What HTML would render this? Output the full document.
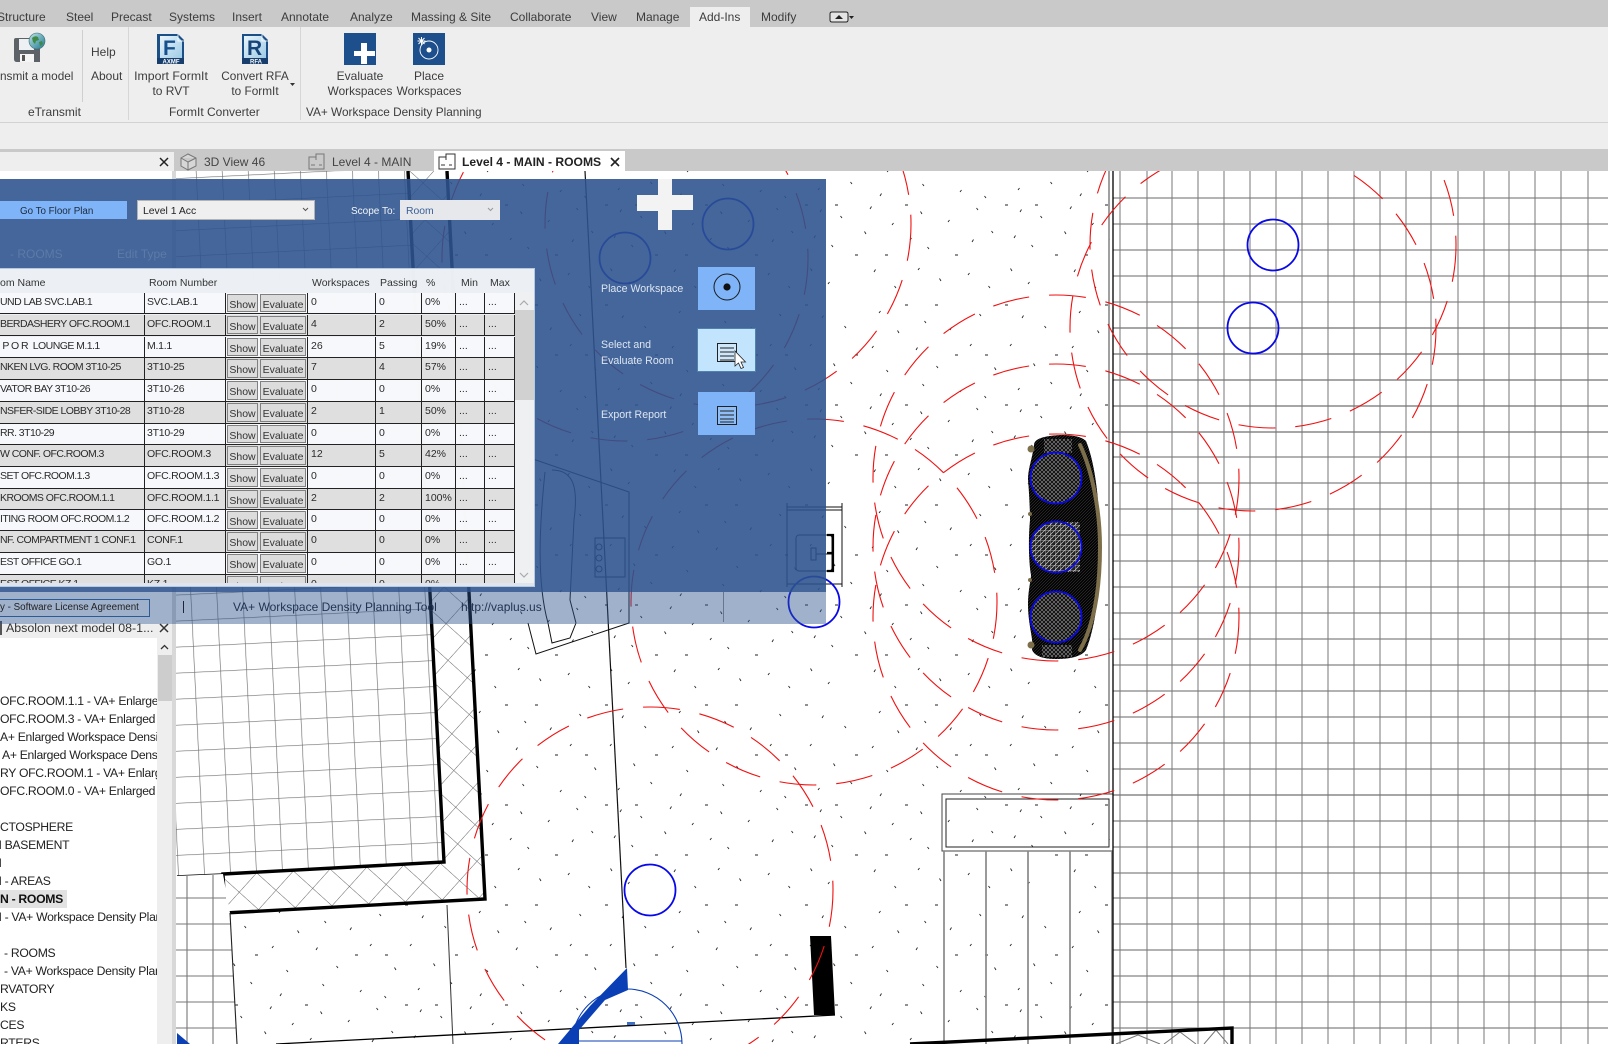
<!DOCTYPE html>
<html><head><meta charset="utf-8"><title>VA+ Workspace Density Planning</title>
<style>
html,body{margin:0;padding:0;background:#fff}
body{width:1608px;height:1044px;position:relative;overflow:hidden;font-family:"Liberation Sans",Arial,sans-serif;color:#3c3c3c}
.a,.t{position:absolute}
.t{white-space:nowrap;font-size:12px;line-height:14px}
.n{font-size:11.8px}
.c{transform:translateX(-50%)}
svg{position:absolute;left:0;top:0;display:block}
#list .t{font-size:12.2px;color:#222;letter-spacing:-.3px}
#win{position:absolute;left:0;top:268px;width:535px;height:319px;background:rgba(255,255,255,.9);border:1px solid #b7c9df;border-left:0;box-sizing:border-box;overflow:hidden}
.r{position:absolute;left:0;width:515px;border-bottom:1px solid #222;box-sizing:content-box;font-size:10.5px;color:#2a2a2a;background:rgba(255,255,255,.55)}
.r.g{background:rgba(222,222,222,.97)}
.r i,.r b{position:absolute;top:0;bottom:0;font-style:normal;font-weight:normal;white-space:nowrap;overflow:hidden;line-height:19px;box-sizing:border-box}
.r i{border-right:1px solid #222}
.r i:nth-child(1){left:0;width:145px;padding-left:0;letter-spacing:-.55px}
.r i:nth-child(2){left:145px;width:81px;padding-left:2px;letter-spacing:-.25px}
.r b{top:1px;bottom:1px;background:#dcdcdc;border:1px solid #808080;text-align:center;line-height:20px;color:#333}
.r b:nth-child(3){left:227px;width:31px}
.r b:nth-child(4){left:260px;width:46px}
.r i:nth-child(5){left:307px;width:69px;padding-left:3px;border-left:1px solid #222}
.r i:nth-child(6){left:376px;width:46px;padding-left:3px}
.r i:nth-child(7){left:422px;width:34px;padding-left:3px}
.r i:nth-child(8){left:456px;width:29px;padding-left:3px}
.r i:nth-child(9){left:485px;width:30px;padding-left:3px}
</style></head><body>

<svg width="1608" height="1044" viewBox="0 0 1608 1044">
<defs>
<pattern id="sp" patternUnits="userSpaceOnUse" width="200" height="200">
<path fill="none" stroke="#222" stroke-width=".9" d="M5 5h3M55 55h3M105 5h3M155 55h3M5 105h3M55 155h3M105 105h3M155 155h3M35 5h3M135 105h3M85 55h3M185 155h3
M20 12l1.500-2.500M42 18l-1.500-2M70 9l1.500-2.500M92 25l1.500-2M122 14l-1.500-2.500M148 22l1.500-2M178 10l-1.500-2M14 38l1.500-2.500M33 47l-1.500-2M66 34l-1.500-2.500M110 40l1.500-2M129 49l-1.500-2M172 42l1.500-2.500M193 33l-1.500-2
M12 71l-1.500-2.500M28 84l1.500-2M74 72l1.500-2.500M96 88l-1.500-2M118 70l1.500-2M141 81l-1.500-2.500M168 75l1.500-2M190 88l-1.500-2M22 118l1.500-2.500M46 128l-1.500-2M79 113l1.500-2M99 133l-1.500-2.500M126 123l-1.500-2M150 130l1.500-2.500M181 116l-1.500-2M10 146l1.500-2M35 166l-1.500-2.500M72 148l1.500-2M88 172l-1.500-2M116 150l1.500-2.500M138 168l-1.500-2M170 146l1.500-2M196 170l-1.500-2.500M18 190l1.500-2M52 184l-1.500-2M80 196l1.500-2.500M124 186l-1.500-2M160 192l1.500-2M186 198l-1.500-2"/>
</pattern>
<pattern id="gr" patternUnits="userSpaceOnUse" width="26" height="26" patternTransform="translate(193 646) rotate(-2.8)">
<path d="M0 0H26M0 0V26" stroke="#707070" stroke-width="1.3" fill="none"/>
</pattern>
<pattern id="hx" patternUnits="userSpaceOnUse" width="26" height="26" patternTransform="translate(448 660) rotate(42)">
<path d="M0 0H26M0 0V26" stroke="#666" stroke-width="1" fill="none"/>
</pattern>
<pattern id="mesh" patternUnits="userSpaceOnUse" width="4" height="4">
<rect width="4" height="4" fill="#151515"/><path d="M0 4L4 0M0 0L4 4" stroke="#aaa" stroke-width=".5"/>
</pattern>
<pattern id="mesh2" patternUnits="userSpaceOnUse" width="3" height="3">
<rect width="3" height="3" fill="#050505"/><path d="M0 3L3 0" stroke="#555" stroke-width=".4"/>
</pattern>
<pattern id="mesh3" patternUnits="userSpaceOnUse" width="5" height="5">
<rect width="5" height="5" fill="#222"/><path d="M0 5L5 0M0 0H5M0 0V5" stroke="#ccc" stroke-width=".7"/>
</pattern>
</defs>

<!-- speckle -->
<rect x="176" y="171" width="934" height="873" fill="url(#sp)"/>

<!-- room with grid -->
<polygon points="176,171 408,171 444,862 223,874 177,876 176,876" fill="#fff"/>
<polygon points="176,171 408,171 444,862 223,874 177,876 176,876" fill="url(#gr)"/>
<!-- hatch wall -->
<polygon points="408,171 447,171 485,899 225,913 223,874 444,862" fill="#fff"/>
<polygon points="408,171 447,171 485,899 225,913 223,874 444,862" fill="url(#hx)"/>
<path d="M408 171L444 862L223 874L225 913L485 899L447 171" fill="none" stroke="#000" stroke-width="3.4"/>
<path d="M223 874L177 876" stroke="#000" stroke-width="1.4"/>

<!-- lower-left grid -->
<polygon points="176,876 223,874 230,913 237,1044 176,1044" fill="#fff"/>
<path d="M176 898H226M176 924H231M176 950H232M176 976H233M176 1002H235M176 1028H236M187 876V1044M213 875V1044" stroke="#777" stroke-width="1.1" fill="none"/>
<path d="M230 913L237 1044" stroke="#222" stroke-width="1.1"/>
<polygon points="177,1033 190,1044 177,1044" fill="#0b3fb5"/>

<!-- thin lines -->
<path d="M447 905L453 1044" stroke="#333" stroke-width="1"/>
<path d="M585 171L626 968" stroke="#111" stroke-width="1.2" fill="none"/>
<path d="M276 1044L835 1015" stroke="#000" stroke-width="1.3"/>

<!-- furniture under overlay -->
<g fill="none" stroke="#111" stroke-width="1">
<path d="M530 458L629 492V623L536 654L528 623"/>
<path d="M548 623L552 643L570 638L576 623M552 470C575 470 578 490 574 520L570 600L576 623M545 472C540 520 536 580 548 623"/>
<rect x="595" y="538" width="30" height="39"/>
<circle cx="599" cy="547" r="3"/><circle cx="599" cy="558" r="3"/><circle cx="599" cy="569" r="3"/>
<path d="M787 503V587M787 507H842M787 510H842M842 503V587M787 584H842"/>
<rect x="796" y="535" width="36" height="36" rx="3"/>
<path d="M811 548H816V560H811ZM816 554H833"/>
</g>
<path d="M827 535H833V571H827M833 553H827" fill="none" stroke="#000" stroke-width="2.2"/>

<!-- right building -->
<rect x="942" y="794" width="171" height="57" fill="#fff" stroke="#444" stroke-width="1"/>
<rect x="942" y="794" width="168" height="57" fill="url(#sp)"/>
<rect x="946" y="799" width="163" height="48" fill="none" stroke="#222" stroke-width="1"/>
<path d="M944 851V1044M986 851V1044M1028 851V1044M1070 851V1044M1112 851V1044" stroke="#888" stroke-width="1.7" fill="none"/>

<!-- right white & grid -->
<rect x="1113" y="171" width="495" height="873" fill="#fff"/>
<path d="M1113 198H1608M1113 224H1608M1113 250H1608M1113 276H1608M1113 302H1608" stroke="#aaa" stroke-width="1.8" fill="none"/>
<path d="M1113 328H1608M1113 354H1608M1113 380H1608M1113 406H1608M1113 432H1608M1113 795H1608" stroke="#888" stroke-width="1.4" fill="none"/>
<path d="M1113 457H1608M1113 483H1608M1113 509H1608M1113 535H1608M1113 561H1608M1113 587H1608M1113 613H1608M1113 639H1608M1113 665H1608M1113 691H1608M1113 717H1608M1113 743H1608M1113 769H1608M1113 821H1608M1113 847H1608M1113 873H1608M1113 898H1608M1113 924H1608M1113 950H1608M1113 976H1608M1113 1002H1608M1113 1028H1608" stroke="#666" stroke-width="1.1" fill="none"/>
<path d="M1120 171V1044M1147 171V1044M1172 171V1044M1198 171V1044M1224 171V1044M1250 171V1044M1276 171V1044M1302 171V1044M1328 171V1044M1354 171V1044M1380 171V1044M1406 171V1044M1431 171V1044M1458 171V1044M1484 171V1044M1509 171V1044M1535 171V1044M1561 171V1044M1588 171V1044" stroke="#777" stroke-width="1" fill="none"/>
<path d="M1109 171V794" stroke="#888" stroke-width="1.6"/>
<path d="M1113 171V1044" stroke="#000" stroke-width="1.3"/>

<!-- bottom thick line -->
<path d="M1138 1035L1160 1044M1138 1035L1116 1044M1180 1032L1196 1044M1180 1032L1164 1044M1216 1030L1228 1044M1216 1030L1204 1044" stroke="#777" fill="none"/>
<path d="M910 1044L1232 1028V1044" fill="none" stroke="#000" stroke-width="3.4"/>

<!-- black rect -->
<polygon points="810,936 831,936 835,1015 814,1015" fill="#000"/>

<!-- blue wedge bottom -->
<polygon points="627,968 628,990 605,1000 579,1030 579,1044 558,1044 590,1006" fill="#0b3fb5"/>
<path d="M578 1041H682M572 1044A55 55 0 0 1 682 1044" fill="none" stroke="#0b3fb5" stroke-width="1.1"/>
<rect x="627" y="1022" width="8" height="3" fill="#3e6fc8"/>

<!-- sofa -->
<path d="M1034 445Q1034 436 1062 435Q1080 435 1086 441C1098 470 1100 520 1100 547C1100 590 1096 625 1086 650Q1080 659 1056 659Q1036 659 1032 650C1034 640 1028 625 1028 605C1028 590 1031 580 1031 575C1029 565 1028 540 1030 520C1030 510 1029 490 1028 480C1028 468 1032 460 1034 445Z" fill="url(#mesh2)"/>
<rect x="1044" y="439" width="28" height="14" fill="url(#mesh)"/>
<rect x="1042" y="645" width="30" height="12" fill="url(#mesh)"/>
<circle cx="1056" cy="478" r="25" fill="url(#mesh)"/>
<rect x="1048" y="522" width="32" height="50" fill="url(#mesh3)"/>
<circle cx="1056" cy="547" r="25" fill="url(#mesh3)"/>
<circle cx="1056" cy="617" r="25" fill="url(#mesh)"/>
<path d="M1080 445C1092 470 1100 510 1100 547C1100 590 1094 625 1080 650" fill="none" stroke="#7d6f4a" stroke-width="4" stroke-linecap="round"/>
<g fill="#7d6f4a"><circle cx="1031" cy="449" r="3.5"/><circle cx="1031" cy="645" r="3.5"/><circle cx="1030" cy="514" r="2"/><circle cx="1030" cy="580" r="2"/></g>

<!-- red circles -->
<g fill="none" stroke="#f01010" stroke-width="1.1" stroke-dasharray="37 20">
<circle cx="1056" cy="478" r="183"/>
<circle cx="1056" cy="547" r="183"/>
<circle cx="1056" cy="617" r="183"/>
<circle cx="1273" cy="245" r="183"/>
<circle cx="1253" cy="328" r="183"/>
<circle cx="814" cy="602" r="183"/>
<circle cx="728" cy="224" r="183"/>
<circle cx="625" cy="258" r="183"/>
<circle cx="650" cy="890" r="183"/>
</g>
<!-- blue circles -->
<g fill="none" stroke="#0808e8" stroke-width="1.8">
<circle cx="1056" cy="478" r="25.5"/>
<circle cx="1056" cy="547" r="25.5"/>
<circle cx="1056" cy="617" r="25.5"/>
<circle cx="1273" cy="245" r="25.5"/>
<circle cx="1253" cy="328" r="25.5"/>
<circle cx="814" cy="602" r="25.5"/>
<circle cx="728" cy="224" r="25.5"/>
<circle cx="625" cy="258" r="25.5"/>
<circle cx="650" cy="890" r="25.5"/>
</g>
</svg>

<!-- chrome -->
<div class="a" style="left:0;top:0;width:1608px;height:27px;background:#c9c9c9"></div>
<div class="a" style="left:690px;top:7px;width:60px;height:20px;background:#eee"></div>
<div class="a" style="left:0;top:27px;width:1608px;height:95px;background:#eee"></div>
<div class="a" style="left:0;top:122px;width:1608px;height:1px;background:#d2d2d2"></div>
<div class="a" style="left:0;top:123px;width:1608px;height:26px;background:#eee"></div>
<div class="a" style="left:0;top:149px;width:1608px;height:22px;background:#c9c9c9"></div>
<div class="a" style="left:0;top:152px;width:174px;height:19px;background:#eee"></div>
<div class="a" style="left:434px;top:151px;width:191px;height:20px;background:#fff"></div>
<div class="a" style="left:82px;top:30px;width:1px;height:72px;background:#cfcfcf"></div>
<div class="a" style="left:128px;top:27px;width:1px;height:93px;background:#d6d6d6"></div>
<div class="a" style="left:300px;top:27px;width:1px;height:93px;background:#d6d6d6"></div>

<!-- ribbon tabs -->
<span class="t" style="left:-3px;top:10px">Structure</span>
<span class="t" style="left:66px;top:10px">Steel</span>
<span class="t" style="left:111px;top:10px">Precast</span>
<span class="t" style="left:169px;top:10px">Systems</span>
<span class="t" style="left:232px;top:10px">Insert</span>
<span class="t" style="left:281px;top:10px">Annotate</span>
<span class="t" style="left:350px;top:10px">Analyze</span>
<span class="t" style="left:411px;top:10px">Massing &amp; Site</span>
<span class="t" style="left:510px;top:10px">Collaborate</span>
<span class="t" style="left:591px;top:10px">View</span>
<span class="t" style="left:636px;top:10px">Manage</span>
<span class="t" style="left:699px;top:10px">Add-Ins</span>
<span class="t" style="left:761px;top:10px">Modify</span>

<!-- ribbon labels -->
<span class="t n" style="left:0;top:69px">nsmit a model</span>
<span class="t" style="left:91px;top:45px">Help</span>
<span class="t" style="left:91px;top:69px">About</span>
<span class="t c" style="left:171px;top:69px;font-size:12.3px">Import FormIt</span>
<span class="t c" style="left:171px;top:84px">to RVT</span>
<span class="t c n" style="left:255px;top:69px">Convert RFA</span>
<span class="t c n" style="left:255px;top:84px">to FormIt</span>
<span class="t c" style="left:360px;top:69px">Evaluate</span>
<span class="t c n" style="left:360px;top:84px">Workspaces</span>
<span class="t c" style="left:429px;top:69px">Place</span>
<span class="t c n" style="left:429px;top:84px">Workspaces</span>
<span class="t" style="left:28px;top:105px">eTransmit</span>
<span class="t" style="left:169px;top:105px">FormIt Converter</span>
<span class="t n" style="left:306px;top:105px">VA+ Workspace Density Planning</span>

<!-- view tabs -->
<span class="t" style="left:204px;top:155px;color:#444">3D View 46</span>
<span class="t" style="left:332px;top:155px;color:#444">Level 4 - MAIN</span>
<span class="t" style="left:462px;top:155px;color:#222;font-weight:bold;font-size:12.1px">Level 4 - MAIN - ROOMS</span>

<!-- left panel lower -->
<div class="a" style="left:0;top:171px;width:172px;height:453px;background:#fff"></div>
<div class="a" style="left:172px;top:171px;width:4px;height:873px;background:#d8d8d8"></div>
<div class="a" style="left:0;top:624px;width:172px;height:14px;background:#eee"></div>
<div class="a" id="list" style="left:0;top:638px;width:157px;height:406px;background:#fff;overflow:hidden">
<span class="t" style="left:0;top:56px">OFC.ROOM.1.1 - VA+ Enlarged Workspace</span>
<span class="t" style="left:0;top:74px">OFC.ROOM.3 - VA+ Enlarged Workspace</span>
<span class="t" style="left:0;top:92px">A+ Enlarged Workspace Density Plan</span>
<span class="t" style="left:2px;top:110px">A+ Enlarged Workspace Density Plan</span>
<span class="t" style="left:0;top:128px">RY OFC.ROOM.1 - VA+ Enlarged Workspace</span>
<span class="t" style="left:0;top:146px">OFC.ROOM.0 - VA+ Enlarged Workspace</span>
<span class="t" style="left:0;top:182px">CTOSPHERE</span>
<span class="t" style="left:-7px;top:200px">N BASEMENT</span>
<span class="t" style="left:-7px;top:218px">N</span>
<span class="t" style="left:-7px;top:236px">N - AREAS</span>
<div class="a" style="left:0;top:252px;width:67px;height:18px;background:#e2e2e2"></div>
<span class="t" style="left:0;top:254px;font-weight:bold;color:#111">N - ROOMS</span>
<span class="t" style="left:-7px;top:272px">N - VA+ Workspace Density Planning</span>
<span class="t" style="left:4px;top:308px">- ROOMS</span>
<span class="t" style="left:4px;top:326px">- VA+ Workspace Density Planning</span>
<span class="t" style="left:0;top:344px">RVATORY</span>
<span class="t" style="left:0;top:362px">KS</span>
<span class="t" style="left:0;top:380px">CES</span>
<span class="t" style="left:0;top:398px">RTERS</span>
</div>
<div class="a" style="left:157px;top:638px;width:15px;height:406px;background:#eee"></div>
<div class="a" style="left:158px;top:655px;width:14px;height:46px;background:#cdcdcd"></div>
<span class="t" style="left:6px;top:621px;font-size:12.4px;color:#333">Absolon next model 08-1...</span>
<div class="a" style="left:0;top:621px;width:2px;height:14px;background:#555"></div>

<!-- overlay -->
<div class="a" style="left:0;top:179px;width:826px;height:413px;background:rgba(45,83,142,.89)"></div>
<div class="a" style="left:0;top:592px;width:826px;height:32px;background:rgba(45,83,142,.45)"></div>
<span class="t" style="left:10px;top:247px;font-size:12px;color:#5d7aa8">- ROOMS</span>
<span class="t" style="left:117px;top:247px;font-size:12px;color:#5d7aa8">Edit Type</span>

<!-- top controls -->
<div class="a" style="left:0;top:201px;width:127px;height:18px;background:#7fb4f9"></div>
<span class="t" style="left:20px;top:205px;font-size:9.8px;color:#1d2a3c">Go To Floor Plan</span>
<div class="a" style="left:137px;top:200px;width:178px;height:20px;background:#efefef;border:1px solid #b3b3b3;box-sizing:border-box"></div>
<span class="t" style="left:143px;top:205px;font-size:10.4px;color:#222">Level 1 Acc</span>
<span class="t" style="left:351px;top:205px;font-size:10px;color:#f2f5fa">Scope To:</span>
<div class="a" style="left:400px;top:200px;width:100px;height:20px;background:#e6e8ec"></div>
<span class="t" style="left:406px;top:205px;font-size:10.4px;color:#3a5f95">Room</span>

<!-- side buttons -->
<span class="t" style="left:601px;top:282px;font-size:10.6px;color:#dde6f2">Place Workspace</span>
<span class="t" style="left:601px;top:338px;font-size:10.6px;color:#dde6f2">Select and</span>
<span class="t" style="left:601px;top:354px;font-size:10.6px;color:#dde6f2">Evaluate Room</span>
<span class="t" style="left:601px;top:408px;font-size:10.6px;color:#dde6f2">Export Report</span>
<div class="a" style="left:698px;top:267px;width:57px;height:43px;background:#7fb4f9"></div>
<div class="a" style="left:697px;top:328px;width:59px;height:44px;background:#c2e5fd;border:1px solid #4f82ad;box-sizing:border-box"></div>
<div class="a" style="left:698px;top:392px;width:57px;height:43px;background:#7fb4f9"></div>

<!-- table window -->
<div id="win">
<div id="hd">
<span class="t" style="left:0;top:7px;font-size:10.5px;color:#333">om Name</span>
<span class="t" style="left:149px;top:7px;font-size:10.5px;color:#333">Room Number</span>
<span class="t" style="left:312px;top:7px;font-size:10.5px;color:#333">Workspaces</span>
<span class="t" style="left:380px;top:7px;font-size:10.5px;color:#333">Passing</span>
<span class="t" style="left:426px;top:7px;font-size:10.5px;color:#333">%</span>
<span class="t" style="left:461px;top:7px;font-size:10.5px;color:#333">Min</span>
<span class="t" style="left:490px;top:7px;font-size:10.5px;color:#333">Max</span>
</div>
<div class="r" style="top:24px;height:20px"><i>UND LAB SVC.LAB.1</i><i>SVC.LAB.1</i><b>Show</b><b>Evaluate</b><i>0</i><i>0</i><i>0%</i><i>...</i><i>...</i></div>
<div class="r g" style="top:46px;height:20px"><i>BERDASHERY OFC.ROOM.1</i><i>OFC.ROOM.1</i><b>Show</b><b>Evaluate</b><i>4</i><i>2</i><i>50%</i><i>...</i><i>...</i></div>
<div class="r" style="top:68px;height:20px"><i>&nbsp;P O R&nbsp; LOUNGE M.1.1</i><i>M.1.1</i><b>Show</b><b>Evaluate</b><i>26</i><i>5</i><i>19%</i><i>...</i><i>...</i></div>
<div class="r g" style="top:89px;height:21px"><i>NKEN LVG. ROOM 3T10-25</i><i>3T10-25</i><b>Show</b><b>Evaluate</b><i>7</i><i>4</i><i>57%</i><i>...</i><i>...</i></div>
<div class="r" style="top:111px;height:21px"><i>VATOR BAY 3T10-26</i><i>3T10-26</i><b>Show</b><b>Evaluate</b><i>0</i><i>0</i><i>0%</i><i>...</i><i>...</i></div>
<div class="r g" style="top:133px;height:21px"><i>NSFER-SIDE LOBBY 3T10-28</i><i>3T10-28</i><b>Show</b><b>Evaluate</b><i>2</i><i>1</i><i>50%</i><i>...</i><i>...</i></div>
<div class="r" style="top:155px;height:20px"><i>RR. 3T10-29</i><i>3T10-29</i><b>Show</b><b>Evaluate</b><i>0</i><i>0</i><i>0%</i><i>...</i><i>...</i></div>
<div class="r g" style="top:176px;height:21px"><i>W CONF. OFC.ROOM.3</i><i>OFC.ROOM.3</i><b>Show</b><b>Evaluate</b><i>12</i><i>5</i><i>42%</i><i>...</i><i>...</i></div>
<div class="r" style="top:198px;height:21px"><i>SET OFC.ROOM.1.3</i><i>OFC.ROOM.1.3</i><b>Show</b><b>Evaluate</b><i>0</i><i>0</i><i>0%</i><i>...</i><i>...</i></div>
<div class="r g" style="top:220px;height:20px"><i>KROOMS OFC.ROOM.1.1</i><i>OFC.ROOM.1.1</i><b>Show</b><b>Evaluate</b><i>2</i><i>2</i><i>100%</i><i>...</i><i>...</i></div>
<div class="r" style="top:241px;height:20px"><i>ITING ROOM OFC.ROOM.1.2</i><i>OFC.ROOM.1.2</i><b>Show</b><b>Evaluate</b><i>0</i><i>0</i><i>0%</i><i>...</i><i>...</i></div>
<div class="r g" style="top:262px;height:21px"><i>NF. COMPARTMENT 1 CONF.1</i><i>CONF.1</i><b>Show</b><b>Evaluate</b><i>0</i><i>0</i><i>0%</i><i>...</i><i>...</i></div>
<div class="r" style="top:284px;height:21px"><i>EST OFFICE GO.1</i><i>GO.1</i><b>Show</b><b>Evaluate</b><i>0</i><i>0</i><i>0%</i><i>...</i><i>...</i></div>
<div class="r g" style="top:306px;height:21px"><i>EST OFFICE KZ.1</i><i>KZ.1</i><b>Show</b><b>Evaluate</b><i>0</i><i>0</i><i>0%</i><i>...</i><i>...</i></div>
<div class="a" style="left:515px;top:23px;width:19px;height:292px;background:rgba(240,240,240,.85)"></div>
<div class="a" style="left:515px;top:41px;width:19px;height:90px;background:rgba(205,205,205,.9)"></div>
<div class="a" style="left:0;top:314px;width:535px;height:5px;background:#dfe5ee"></div>
</div>

<!-- status strip -->
<div class="a" style="left:-2px;top:599px;width:152px;height:18px;border:1px solid #2c5a94;box-sizing:border-box"></div>
<span class="t" style="left:0;top:601px;font-size:9.8px;color:#222">y - Software License Agreement</span>
<div class="a" style="left:183px;top:601px;width:1px;height:12px;background:#223"></div>
<span class="t" style="left:233px;top:600px;color:#1f3350">VA+ Workspace Density Planning Tool</span>
<span class="t" style="left:461px;top:600px;color:#1f3350">http://vaplus.us</span>
<div class="a" style="left:723px;top:592px;width:1px;height:30px;background:#6a7688"></div>

<!-- icons on top -->
<svg width="1608" height="1044" viewBox="0 0 1608 1044" style="pointer-events:none">
<defs>
<linearGradient id="gl" x1="0" y1="0" x2="1" y2="1"><stop offset="0" stop-color="#bfe3ea"/><stop offset="1" stop-color="#1f7a8f"/></linearGradient>
<linearGradient id="fd" x1="0" y1="0" x2="1" y2="1"><stop offset="0" stop-color="#e9f5fb"/><stop offset="1" stop-color="#9fcbe6"/></linearGradient>
</defs>
<!-- tab icon -->
<path d="M832 12h14q2 0 2 2v6q0 2-2 2h-14q-2 0-2-2v-6q0-2 2-2z" fill="#e4e4e4" stroke="#222" stroke-width="1"/>
<path d="M835 19l4-4 4 4z" fill="#222"/><path d="M849 16h5l-2.500 3z" fill="#222"/>
<!-- floppy -->
<path d="M16 38H38L40 40V62H17Q14 62 14 59V40Q14 38 16 38Z" fill="#5d6268"/>
<rect x="19" y="39" width="15" height="11" fill="#eef1f3"/>
<rect x="20" y="54" width="14" height="8" fill="#f5f5f5"/><rect x="22" y="55" width="3" height="6" fill="#555"/>
<circle cx="37" cy="41" r="8" fill="url(#gl)" stroke="#3d6b74" stroke-width=".6"/>
<path d="M32 38q3-3 6-1l1 3-3 1-1 3-2-2zM39 42l3-1 1 3-3 2z" fill="#3f8a45"/>
<!-- F icon -->
<path d="M158 34H178L184 40V64H157V34Z" fill="#1b4f87"/>
<path d="M160 36H177L182 41V58H160Z" fill="url(#fd)"/>
<path d="M178 34V41H184" fill="none" stroke="#fff" stroke-width=".8"/>
<text x="163" y="55" font-family="Liberation Sans,sans-serif" font-size="21" font-weight="bold" fill="#17508f">F</text>
<rect x="157" y="58" width="27" height="6" fill="#173e6c"/>
<text x="162.500" y="63.500" font-family="Liberation Sans,sans-serif" font-size="6" font-weight="bold" fill="#fff">AXMF</text>
<!-- R icon -->
<path d="M242 34H262L268 40V64H242V34Z" fill="#1b4f87"/>
<path d="M244 36H261L266 41V58H244Z" fill="url(#fd)"/>
<path d="M262 34V41H268" fill="none" stroke="#fff" stroke-width=".8"/>
<text x="247" y="55" font-family="Liberation Sans,sans-serif" font-size="21" font-weight="bold" fill="#17457a">R</text>
<rect x="242" y="58" width="26" height="6" fill="#173e6c"/>
<text x="250" y="63.500" font-family="Liberation Sans,sans-serif" font-size="6" font-weight="bold" fill="#fff">RFA</text>
<!-- Evaluate -->
<rect x="344" y="33" width="32" height="32" fill="#1d4f8c"/>
<path d="M354 51H361V43H367V51H375V56H367V64H361V56H354Z" fill="#fff"/>
<!-- Place -->
<rect x="413" y="33" width="32" height="32" fill="#1d4f8c"/>
<circle cx="429" cy="50" r="9" fill="none" stroke="#fff" stroke-width=".9"/>
<circle cx="429" cy="50" r="2.500" fill="#fff"/>
<path d="M421.500 37V45M417.500 41H425.500M418.500 38L424.500 44M424.500 38L418.500 44" stroke="#fff" stroke-width="1"/>
<!-- ribbon dropdown -->
<path d="M290 83h5l-2.500 3z" fill="#333"/>
<!-- panel closes -->
<path d="M160 158L168 166M168 158L160 166" stroke="#222" stroke-width="1.500"/>
<path d="M160 624L168 632M168 624L160 632" stroke="#333" stroke-width="1.500"/>
<path d="M161 649L164.500 645.500L168 649" stroke="#333" stroke-width="1.300" fill="none"/>
<path d="M611 158L619 166M619 158L611 166" stroke="#222" stroke-width="1.600"/>
<!-- tab icons -->
<path d="M188 154L196 158V166L188 170L181 166V158ZM181 158L188 162L196 158M188 162V170" fill="#d6d6d6" stroke="#777" stroke-width="1"/>
<g fill="none" stroke="#777" stroke-width="1"><path d="M309 157H316V154H324V169H309ZM316 157V160M319 165H322M311 165H315"/></g>
<g fill="none" stroke="#333" stroke-width="1"><path d="M439 157H446V154H455V169H439ZM446 157V160M449 165H452M441 165H445"/></g>
<!-- combo chevrons -->
<path d="M303 208L305.500 210.500L308 208" stroke="#555" fill="none"/>
<path d="M488 208L490.500 210.500L493 208" stroke="#999" fill="none"/>
<!-- plus -->
<path d="M658 179H672V195H693V210H672V230H658V211H637V195H658Z" fill="#f3f3f3"/>
<!-- place btn -->
<circle cx="727" cy="287" r="13" fill="none" stroke="#1a1a1a" stroke-width="1"/>
<circle cx="727" cy="287" r="3.600" fill="#111"/>
<!-- evaluate doc + cursor -->
<rect x="717.500" y="343.500" width="19" height="18" fill="#cfe7fb" stroke="#222" stroke-width="1"/>
<path d="M720 348H734M720 352H734M720 356H734M720 360H734" stroke="#222" stroke-width="1"/>
<path d="M735 351V366L738.500 363L741 368.500L743.500 367.500L741 362L745.500 362Z" fill="#fff" stroke="#222" stroke-width=".8"/>
<!-- export doc -->
<rect x="717.500" y="406.500" width="19" height="18" fill="#8fbdf5" stroke="#222" stroke-width="1"/>
<path d="M720 411H734M720 415H734M720 419H734M720 422H734" stroke="#222" stroke-width="1"/>
<!-- scrollbar arrows -->
<path d="M520 305L524 301L528 305" stroke="#aaa" fill="none" stroke-width="1.200"/>
<path d="M520 573L524 577L528 573" stroke="#aaa" fill="none" stroke-width="1.200"/>
</svg>
</body></html>
